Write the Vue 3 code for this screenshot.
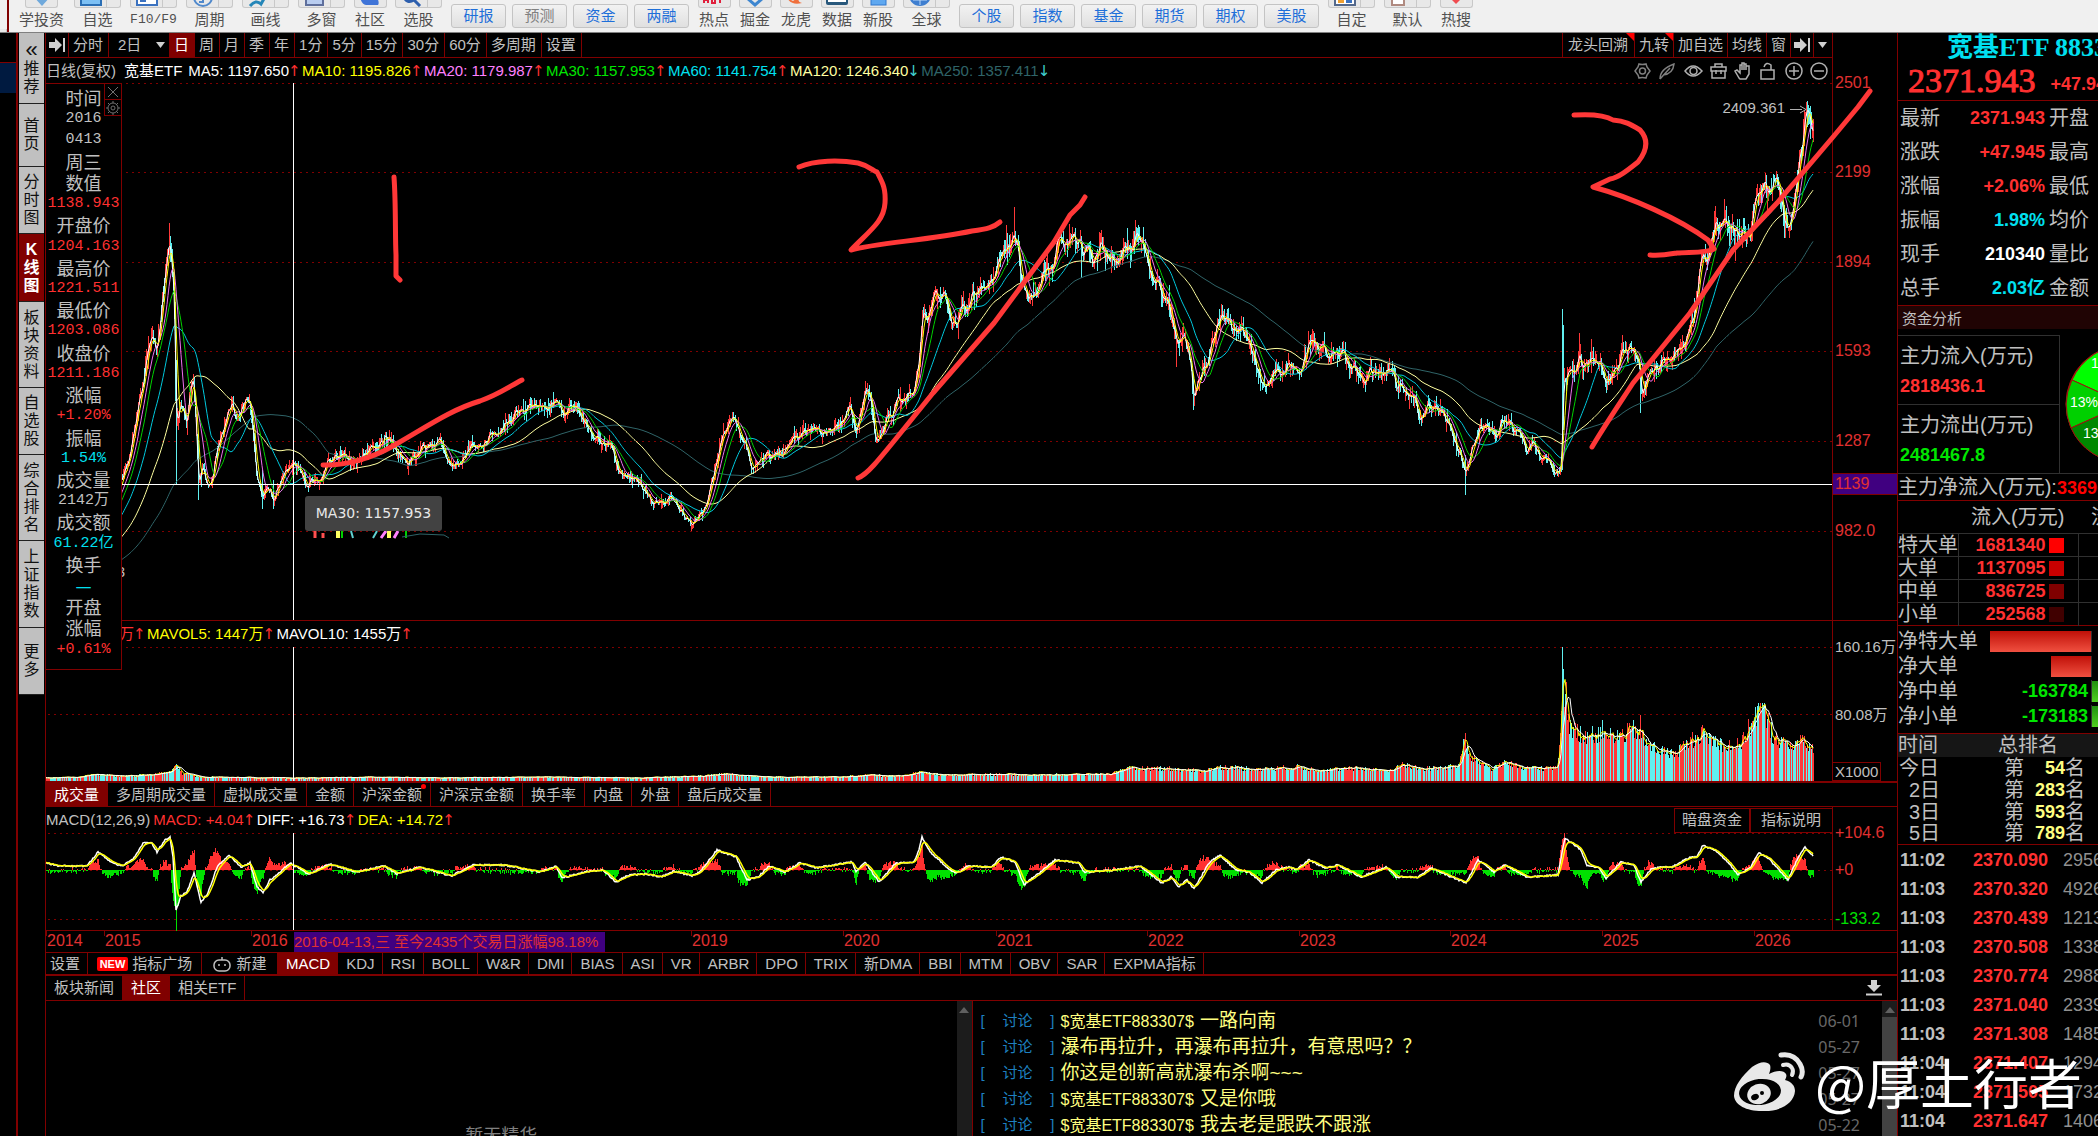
<script setup>
import { ref } from 'vue'

/* ---------- toolbar ---------- */
const toolsA = [
  { t: '拟', k: 'pen', c: 'edge' },
  { t: '学投资', k: 'diamond', c: 'wide' },
  { t: '自选', k: 'folder', c: 'split' },
  { t: 'F10/F9', k: 'doc', c: 'split serif' },
  { t: '周期', k: 'clock', c: 'split' },
  { t: '画线', k: 'draw', c: 'split' },
  { t: '多窗', k: 'window', c: 'split' },
  { t: '社区', k: 'chat', c: '' },
  { t: '选股', k: 'search', c: 'split' }
]
const linksA = ['研报', '预测', '资金', '两融']
const toolsB = [
  { t: '热点', k: 'hot', c: '' },
  { t: '掘金', k: 'gem', c: '' },
  { t: '龙虎', k: 'fire', c: '' },
  { t: '数据', k: 'data', c: '' },
  { t: '新股', k: 'new', c: '' },
  { t: '全球', k: 'globe', c: 'split' }
]
const linksB = ['个股', '指数', '基金', '期货', '期权', '美股']
const toolsC = [
  { t: '自定', k: 'custom', c: 'split' },
  { t: '默认', k: 'default', c: 'split' },
  { t: '热搜', k: 'heart', c: '' }
]

/* ---------- side tabs ---------- */
const sideTabs = [
  { t: '推荐', h: 71 }, { t: '首页', h: 63 }, { t: '分时图', h: 67 },
  { t: 'K线图', h: 68, on: true }, { t: '板块资料', h: 86 }, { t: '自选股', h: 67 },
  { t: '综合排名', h: 86 }, { t: '上证指数', h: 87 }, { t: '更多', h: 67 }
]

const dayRange = ref('2日')
const periods = ['日', '周', '月', '季', '年', '1分', '5分', '15分', '30分', '60分', '多周期', '设置']
const maList = [
  { n: 'MA5: 1197.650', c: '#ffffff', up: true },
  { n: 'MA10: 1195.826', c: '#ffff00', up: true },
  { n: 'MA20: 1179.987', c: '#ff80ff', up: true },
  { n: 'MA30: 1157.953', c: '#00e600', up: true },
  { n: 'MA60: 1141.754', c: '#00e0f0', up: true },
  { n: 'MA120: 1246.340', c: '#ffffa0', up: false },
  { n: 'MA250: 1357.411', c: '#2f6468', up: false }
]
const info = [
  ['时间'], ['2016'], ['0413'], ['周三'], ['数值'], ['1138.943', 'r'],
  ['开盘价'], ['1204.163', 'r'], ['最高价'], ['1221.511', 'r'], ['最低价'], ['1203.086', 'r'],
  ['收盘价'], ['1211.186', 'r'], ['涨幅'], ['+1.20%', 'r'], ['振幅'], ['1.54%', 'c'],
  ['成交量'], ['2142万'], ['成交额'], ['61.22亿', 'c'], ['换手'], ['—', 'c'],
  ['开盘'], ['涨幅'], ['+0.61%', 'r']
]
const volTabs = ['成交量', '多周期成交量', '虚拟成交量', '金额', '沪深金额', '沪深京金额', '换手率', '内盘', '外盘', '盘后成交量']
const indTabs = ['MACD', 'KDJ', 'RSI', 'BOLL', 'W&R', 'DMI', 'BIAS', 'ASI', 'VR', 'ARBR', 'DPO', 'TRIX', '新DMA', 'BBI', 'MTM', 'OBV', 'SAR', 'EXPMA指标']
const priceGrid = [
  { v: '2501', y: 83 }, { v: '2199', y: 172 }, { v: '1894', y: 262 },
  { v: '1593', y: 351 }, { v: '1287', y: 441 }, { v: '982.0', y: 531 }
]
const years = [
  ['2014', 46], ['2015', 104], ['2016', 251], ['2019', 691], ['2020', 843], ['2021', 996],
  ['2022', 1147], ['2023', 1299], ['2024', 1450], ['2025', 1602], ['2026', 1754]
]

/* ---------- series ---------- */
let seed = 20160413
const rnd = () => {
  seed = (seed * 1103515245 + 12345) % 2147483648
  return seed / 2147483648
}
const parse = s => s.trim().split(/\s+/).map(p => p.split(',').map(Number))
const interp = pts => {
  let i = 0
  return x => {
    while (i < pts.length - 2 && x > pts[i + 1][0]) i++
    const [x0, y0] = pts[i]
    const [x1, y1] = pts[i + 1]
    return y0 + ((y1 - y0) * Math.max(0, Math.min(x - x0, x1 - x0))) / (x1 - x0)
  }
}
const line = (arr, from, to, x0) => {
  let d = ''
  for (let x = from; x <= to; x++) d += (d ? 'L' : 'M') + x + ' ' + arr[x - x0].toFixed(1)
  return d
}
const average = (arr, w) => {
  let s = 0
  return arr.map((v, i) => {
    s += v
    if (i >= w) s -= arr[i - w]
    return s / Math.min(i + 1, w)
  })
}

const pricePts = parse(`-110,600 40,575 80,550 104,520 122,478 135,430 142,385 150,345 153,338 156,350 160,328 164,280 167,258
169,246 171,255 174,300 175,395 177,422 180,395 183,408 186,425 190,388 193,380 196,440 198,488 202,465 207,488 211,480 218,445
226,420 229,407 232,404 236,420 240,415 246,398 250,407 254,440 256,470 262,500 266,485 273,502 280,480 287,470 293,463 300,474
307,485 312,478 322,475 328,458 338,460 343,450 350,458 358,462 367,450 376,447 385,436 392,449 400,460 407,465 415,455 427,446
440,443 447,458 452,464 460,462 470,448 488,435 515,415 542,405 555,400 562,412 575,406 589,428 609,441 618,470 640,483 656,504
669,496 682,512 692,524 702,515 712,482 722,435 732,422 743,441 752,466 765,455 779,464 792,439 809,431 823,435 836,430 840,427
849,403 856,423 865,390 870,397 875,438 883,430 897,405 902,410 915,387 919,353 922,305 927,313 933,302 938,303 945,297 949,315
956,316 961,300 967,305 972,290 983,290 993,283 999,253 1006,245 1010,250 1014,233 1017,253 1021,290 1027,297 1036,292 1043,275
1051,275 1056,247 1063,253 1070,242 1078,238 1083,250 1086,245 1092,258 1101,248 1108,258 1118,253 1126,250 1133,243 1138,240
1147,250 1151,270 1156,278 1161,300 1168,297 1176,338 1184,343 1190,360 1193,393 1197,383 1202,370 1206,373 1211,347 1218,319
1222,315 1229,327 1236,333 1242,327 1247,337 1252,347 1258,373 1263,385 1270,385 1277,367 1283,373 1288,362 1295,375 1302,363
1308,342 1315,342 1322,350 1329,360 1340,349 1345,360 1354,367 1363,378 1372,373 1381,375 1388,367 1396,392 1400,387 1407,397
1415,400 1419,418 1430,404 1440,413 1452,433 1460,453 1465,476 1472,443 1480,425 1490,433 1495,437 1500,421 1510,425 1520,440
1527,450 1532,445 1543,460 1557,473 1561,463 1563,385 1567,378 1570,370 1575,370 1579,347 1583,371 1592,359 1600,363 1605,388
1613,373 1622,352 1632,349 1638,363 1641,394 1647,380 1653,369 1667,367 1673,360 1682,343 1688,320 1693,315 1697,287 1702,255
1707,257 1712,232 1716,225 1719,243 1724,220 1730,224 1737,241 1743,234 1750,232 1757,186 1763,183 1767,195 1774,182 1780,193
1785,221 1790,218 1795,185 1800,165 1804,130 1808,123 1813,130`)

const X0 = -110
const X1 = 1813
const spikes = { 170: [236, 262], 176: [360, 484], 198: [440, 500], 262: [470, 509], 273: [480, 509], 1014: [207, 240], 1006: [225, 250], 1081: [245, 278], 1176: [330, 367], 1193: [375, 410], 1222: [307, 320], 1308: [331, 345], 1465: [455, 495], 1562: [309, 470], 1563: [325, 430], 1579: [333, 360], 1591: [339, 362], 1640: [375, 413], 1715: [206, 235], 1725: [210, 228], 1735: [235, 261], 1784: [205, 238], 1804: [110, 140], 1810: [111, 135] }
const closes = []
let redBars = ''
let cyanBars = ''
const priceAt = interp(pricePts)
let drift = 0
for (let x = X0; x <= X1; x++) {
  const base = priceAt(x)
  const amp = 3 + Math.max(0, 531 - base) * 0.017
  drift = drift * 0.72 + (rnd() - 0.5) * amp * 1.8
  const c = base + drift
  closes.push(c)
  if (x >= 46) {
    const prev = closes[closes.length - 2]
    const up = rnd() < 0.3 ? rnd() > 0.5 : c < prev
    const hi = Math.min(c, prev) - rnd() * rnd() * amp * 2.4
    const lo = Math.max(c, prev) + rnd() * rnd() * amp * 2.4
    const s = spikes[x] || [hi, lo]
    const seg = `M${x}.5 ${Math.round(Math.min(s[0], hi))}V${Math.round(Math.max(s[1], lo))}`
    if (up && x !== 1562 && x !== 1563) redBars += seg
    else cyanBars += seg
  }
}
const maDefs = [[155, '#2f6468'], [75, '#ffffa0'], [37, '#00c8dc'], [3, '#ffffff'], [19, '#00d000'], [12, '#f070f0'], [6, '#ffff00']]
const maPaths = maDefs.map(([w, c]) => ({ c, d: line(average(closes, w), 46, X1, X0) }))

/* volume */
const volPts = parse(`46,3 80,4 92,7 120,5 150,6 170,9 175,16 182,8 200,4 300,3 385,4 440,3 540,4 640,3 700,5 725,7 760,4 840,4 870,6
900,5 920,9 940,6 1000,7 1030,6 1110,7 1122,12 1160,13 1200,10 1220,14 1260,12 1300,14 1320,11 1360,13 1392,10 1400,18 1420,12
1458,15 1464,40 1470,24 1482,18 1492,12 1505,20 1520,13 1557,13 1561,70 1565,92 1570,52 1580,48 1592,46 1605,52 1612,42 1625,48
1636,52 1645,38 1660,31 1672,27 1685,36 1700,48 1712,42 1725,36 1740,36 1750,56 1758,72 1764,68 1772,48 1785,36 1800,40 1813,33`)
const volAt = interp(volPts)
const vols = []
let volRed = ''
let volCyan = ''
for (let x = 46; x <= X1; x++) {
  let h = volAt(x) * (0.78 + rnd() * 0.42)
  if (x === 1562) h = 134
  if (x === 1563) h = 112
  if (x === 1640) h = 66
  if (x === 1465) h = 48
  if (x === 176) h = 17
  vols.push(781 - h)
  const seg = `M${x}.5 781V${Math.round(781 - h)}`
  if (Math.floor(rnd() * 2) && x !== 1562 && x !== 1563) volRed += seg
  else volCyan += seg
}
const volMa5 = line(average(vols, 4), 46, X1, 46)
const volMa10 = line(average(vols, 9), 46, X1, 46)

/* MACD */
const diffPts = parse(`46,863 60,866 87,866 98,852 112,863 123,866 134,858 143,843 152,843 157,852 165,840 170,837 173,857 176,910
181,896 187,892 194,873 201,902 208,893 217,867 229,855 241,867 250,863 257,887 263,893 270,880 279,873 290,863 308,874 330,864
357,872 384,866 397,874 420,867 451,876 473,865 504,865 540,872 556,866 562,878 585,872 603,870 616,882 629,875 647,874 661,877
674,871 692,876 700,872 717,850 736,857 747,880 758,877 769,866 785,872 800,863 816,868 852,862 856,872 865,862 879,882 896,863
914,862 919,850 922,837 930,852 950,870 957,873 968,866 992,867 1001,857 1015,862 1024,885 1039,873 1055,860 1079,863 1084,872
1115,870 1140,866 1162,883 1171,877 1178,887 1187,880 1194,889 1209,863 1220,855 1236,870 1249,872 1262,883 1276,870 1289,867
1296,870 1309,860 1325,868 1338,865 1361,877 1387,867 1396,877 1418,877 1431,868 1454,878 1466,883 1478,860 1494,872 1505,865
1527,877 1558,875 1563,847 1565,838 1581,850 1587,865 1599,868 1606,878 1621,862 1634,865 1641,882 1652,868 1672,867 1688,858
1697,857 1703,845 1717,852 1728,862 1738,875 1750,868 1759,853 1770,860 1788,880 1797,860 1805,847 1814,857`)
const diffAt = interp(diffPts)
const diff = []
for (let x = 46; x <= X1; x++) diff.push(diffAt(x) + (rnd() - 0.5) * 1.6)
let ema = diff[0]
const dea = diff.map(v => (ema = ema * 0.7 + v * 0.3))
let macdUp = ''
let macdDown = ''
diff.forEach((v, i) => {
  const x = 46 + i
  let y = 870 + (v - dea[i]) * 3 + (rnd() - 0.5) * 3
  if (x === 1564) y = 833
  if (x === 176) y = 930
  y = Math.round(Math.max(833, Math.min(930, y)))
  if (x !== 176 && y > 905) y = 905
  if (y < 870) macdUp += `M${x}.5 870V${y}`
  else macdDown += `M${x}.5 870V${y + 1}`
})
const diffPath = line(diff, 46, X1, 46)
const deaPath = line(dea, 46, X1, 46)

/* ---------- quote panel ---------- */
const quotes = [
  ['最新', '2371.943', 'r', '开盘'], ['涨跌', '+47.945', 'r', '最高'], ['涨幅', '+2.06%', 'r', '最低'],
  ['振幅', '1.98%', 'c', '均价'], ['现手', '210340', 'w', '量比'], ['总手', '2.03亿', 'c', '金额']
]
const orders = [
  ['特大单', '1681340', 'q1'], ['大单', '1137095', 'q2'], ['中单', '836725', 'q3'], ['小单', '252568', 'q4']
]
const nets = [
  { t: '净特大单', w: 101 }, { t: '净大单', w: 40 },
  { t: '净中单', v: '-163784' }, { t: '净小单', v: '-173183' }
]
const ranks = [['今日', '54'], ['2日', '283'], ['3日', '593'], ['5日', '789']]
const ticks = [
  ['11:02', '2370.090', '2956'], ['11:03', '2370.320', '4926'], ['11:03', '2370.439', '1213'],
  ['11:03', '2370.508', '1338'], ['11:03', '2370.774', '2988'], ['11:03', '2371.040', '2339'],
  ['11:03', '2371.308', '1485'], ['11:04', '2371.407', '1294'], ['11:04', '2371.505', '1732'],
  ['11:04', '2371.647', '1406']
]
const posts = [
  { s: '$宽基ETF883307$', t: '一路向南', d: '06-01' },
  { s: '', t: '瀑布再拉升，再瀑布再拉升，有意思吗？？', d: '05-27' },
  { s: '', t: '你这是创新高就瀑布杀啊~~~', d: '05-27' },
  { s: '$宽基ETF883307$', t: '又是你哦', d: '05-27' },
  { s: '$宽基ETF883307$', t: '我去老是跟跌不跟涨', d: '05-22' }
]
</script>

<template>
  <div class="app">
    <header class="toolbar">
      <template v-for="(group, g) in [[toolsA, linksA], [toolsB, linksB], [toolsC, []]]" :key="g">
        <button v-for="t in group[0]" :key="t.t" class="tool" :class="t.c">
          <span class="tool-box">
            <svg class="tool-ico" viewBox="0 0 24 8" aria-hidden="true">
              <path v-if="t.k === 'pen'" d="M5 -3L13 6" stroke="#b5602a" stroke-width="5" />
              <path v-if="t.k === 'diamond'" d="M3 -4H21L12 6Z" fill="#6fa9dc" />
              <path v-if="t.k === 'folder'" d="M2 -3H22V5H2Z" fill="#7cc0f4" stroke="#2a6fb5" stroke-width="2" />
              <g v-if="t.k === 'doc'"><path d="M2 -3H22V5H2Z" fill="#fff" stroke="#3b72c0" stroke-width="2" /><path d="M5 -2H11V2H5Z" fill="#3b72c0" /></g>
              <g v-if="t.k === 'clock'" fill="none" stroke="#5089cc" stroke-width="2"><circle cx="12" cy="-3" r="9" /><path d="M12 -3V2H8" /></g>
              <path v-if="t.k === 'draw'" d="M3 6Q9 -1 14 4L18 -3" fill="none" stroke="#2486b8" stroke-width="3" />
              <path v-if="t.k === 'window'" d="M3 -4H20V5H3Z" fill="#b9cdf0" stroke="#5f6f9c" stroke-width="2" />
              <path v-if="t.k === 'chat'" d="M2 -4H18Q22 2 20 5H8Q3 4 2 -4Z" fill="#3f74d8" />
              <path v-if="t.k === 'search'" d="M4 -3Q7 4 14 0L20 6" fill="none" stroke="#2d5fae" stroke-width="3" />
              <path v-if="t.k === 'hot'" d="M2 -2V3M2 0H6M6 -2V3M10 -2V3H13V-2M18 -2V3M16 -2H21" fill="none" stroke="#e0203c" stroke-width="2" />
              <path v-if="t.k === 'gem'" d="M4 -2L12 5L20 -2" fill="none" stroke="#3d86d0" stroke-width="3" />
              <path v-if="t.k === 'fire'" d="M3 -2Q8 6 18 3Q13 2 15 -3L9 1Z" fill="#f0703c" />
              <g v-if="t.k === 'data'"><rect x="1" y="-4" width="22" height="9" rx="2" fill="#28587c" /><path d="M3 1H21" stroke="#fff" stroke-width="2" /></g>
              <rect v-if="t.k === 'new'" x="5" y="-3" width="15" height="8" fill="#5fa8f0" stroke="#3078d0" />
              <g v-if="t.k === 'globe'"><circle cx="12" cy="-5" r="11" fill="#3f7fd0" /><path d="M12 -3V5M5 0H19" stroke="#bcd8f6" stroke-width="1" /></g>
              <g v-if="t.k === 'custom'"><path d="M2 -4H22V5H2Z" fill="#fff" stroke="#54698c" stroke-width="2" /><path d="M5 -1H11V3H5Z" fill="#f0a030" /><path d="M13 -2H19V3H13Z" fill="#3b72c0" /></g>
              <path v-if="t.k === 'default'" d="M3 -4H15V5H3Z" fill="#fff" stroke="#b08a80" stroke-width="2" />
              <path v-if="t.k === 'heart'" d="M4 -4H20L12 4Z" fill="#f04c50" />
            </svg>
          </span>
          <span class="tool-label">{{ t.t }}</span>
        </button>
        <div v-if="group[1].length" class="links">
          <button v-for="l in group[1]" :key="l" class="link" :class="{ dim: l === '预测' }">{{ l }}</button>
        </div>
      </template>
    </header>

    <div class="body">
      <div class="edge"><div class="edge-sel"></div></div>

      <nav class="side">
        <button v-for="s in sideTabs" :key="s.t" class="side-tab" :class="{ on: s.on }" :style="{ height: s.h + 'px' }">
          <span v-if="s.t === '推荐'" class="chev">«</span>
          <span class="side-text">{{ s.t }}</span>
        </button>
      </nav>

      <main class="center">
        <div class="row periods">
          <div class="row-main">
            <button class="cell ico" aria-label="跳转">
              <svg width="16" height="14" viewBox="0 0 16 14"><path d="M0 4H6V0L13 7L6 14V10H0Z" fill="#d0d0d0" /><path d="M15 0V14" stroke="#d0d0d0" stroke-width="2" /></svg>
            </button>
            <button class="cell">分时</button>
            <span class="cell pick">
              <select v-model="dayRange" aria-label="多日分时"><option>2日</option></select>
              <svg width="9" height="6" viewBox="0 0 9 6"><path d="M0 0H9L4.500 6Z" fill="#d0d0d0" /></svg>
            </span>
            <button v-for="p in periods" :key="p" class="cell" :class="{ on: p === '日' }">{{ p }}</button>
            <span class="grow"></span>
            <button class="cell lead flag">龙头回溯</button>
            <button class="cell snug flag">九转</button>
            <button class="cell snug">加自选</button>
            <button class="cell snug">均线</button>
            <button class="cell snug">窗</button>
            <button class="cell ico" aria-label="收起">
              <svg width="16" height="14" viewBox="0 0 16 14"><path d="M0 4H6V0L13 7L6 14V10H0Z" fill="#d0d0d0" /><path d="M15 0V14" stroke="#d0d0d0" stroke-width="2" /></svg>
            </button>
            <button class="cell drop" aria-label="更多选项">
              <svg width="9" height="6" viewBox="0 0 9 6"><path d="M0 0H9L4.500 6Z" fill="#d0d0d0" /></svg>
            </button>
          </div>
          <div class="axis"></div>
        </div>

        <div class="row ma-row">
          <div class="row-main">
            <span class="ma-title">日线(复权)</span>
            <b class="ma-name">宽基ETF</b>
            <span v-for="m in maList" :key="m.n" class="ma" :style="{ color: m.c }">{{ m.n }}<i :class="m.up ? 'up' : 'down'">{{ m.up ? '↑' : '↓' }}</i></span>
            <span class="grow"></span>
            <svg class="chart-tools" width="198" height="20" viewBox="0 0 198 20" fill="none" stroke="#b0b0b0" stroke-width="1.500">
              <path stroke="#808080" d="M7 3Q10 4 14 3L15 6L18 10L15 14L14 17Q10 16 7 17L6 14L3 10L6 6Z" /><circle stroke="#808080" cx="10.500" cy="10" r="3" />
              <path stroke="#808080" d="M28 18Q28 8 42 3Q41 13 31 14M28 18L38 7" />
              <path d="M53 10Q61 0 70 10Q61 20 53 10Z" /><circle cx="61.500" cy="10" r="3.500" />
              <path d="M79 6H94V10H79ZM80 10V17H93V10M83 6V3H90V6M84 9V13M89 9V13" />
              <path d="M107 17L103 10L105 9L108 12V4H110V9V2H112V9V3H114V9V5H117V13L114 18H108Z" />
              <path d="M129 9H142V18H129ZM132 6Q134 0 139 4V9" />
              <circle cx="162" cy="10" r="8" /><path d="M157 10H167M162 5V15" />
              <circle cx="187" cy="10" r="8" /><path d="M182 10H192" />
            </svg>
          </div>
          <div class="axis"></div>
        </div>

        <section class="row price">
          <div class="row-main">
            <svg class="plot" viewBox="46 83 1786 537" preserveAspectRatio="none">
              <g class="grid"><path v-for="g in priceGrid" :key="g.y" :d="`M48 ${g.y}.5H1832`" /></g>
              <g fill="none" shape-rendering="crispEdges">
                <path :d="cyanBars" stroke="#60f0f0" />
                <path :d="redBars" stroke="#ff3838" />
              </g>
              <g fill="none"><path v-for="m in maPaths" :key="m.c" :d="m.d" :stroke="m.c" /></g>
              <path d="M315 531V538M323 533V538" stroke="#ff5050" stroke-width="3" />
              <path d="M338 531V538M389 531V538" stroke="#ffff60" stroke-width="4" />
              <path d="M342 531V538M406 531V538" stroke="#00d000" stroke-width="2" />
              <path d="M351 531L353 538M373 538L377 531" stroke="#60d0d0" stroke-width="2" />
              <path d="M381 538L386 531M394 538L398 531" stroke="#ff80ff" stroke-width="3" />
              <path d="M402 537L420 534L444 535L449 538" fill="none" stroke="#2f6468" />
              <path d="M46 484.500H1832M293.500 83V620" stroke="#ffffff" />
              <path d="M1790 109.500H1802M1800 106L1806 109.500L1800 113" fill="none" stroke="#b0b0b0" />
            </svg>
            <span class="peak">2409.361</span>
            <span class="trough">993</span>
            <div class="tip">MA30: 1157.953</div>
          </div>
          <div class="axis">
            <span v-for="g in priceGrid" :key="g.v" class="tick" :style="{ top: g.y - 83 + 'px' }">{{ g.v }}</span>
            <span class="cursor">1139</span>
          </div>
          <svg class="ink" viewBox="46 83 1851 537" preserveAspectRatio="none">
            <path d="M394 177C396 205 395 235 396 255V276L400 280" />
            <path d="M323 465C345 466 372 458 393 446C425 428 450 410 480 401C500 394 510 386 522 380" />
            <path d="M799 167C815 160 840 160 858 163C870 166 873 171 877 172C882 182 886 187 885 203C884 222 868 232 851 250C875 243 930 240 972 231C988 229 994 227 1000 222" />
            <path d="M858 478C869 474 880 458 933 393L994 323L1054 242L1070 215L1080 205L1085 197" />
            <path d="M1574 115C1590 114 1605 115 1613 120C1625 121 1630 124 1640 130C1650 141 1646 152 1638 162C1628 170 1618 178 1610 179L1593 187C1630 197 1680 219 1708 240L1714 249C1708 253 1690 252 1677 253C1665 255 1660 256 1650 255" />
            <path d="M1592 447C1605 425 1620 403 1633 383L1690 313L1733 250L1777 203L1833 137L1858 107L1870 91" />
          </svg>
          <aside class="info">
            <div class="info-tools">
              <button aria-label="关闭"><svg width="12" height="12" viewBox="0 0 12 12"><path d="M1 1L11 11M11 1L1 11" stroke="#707070" /></svg></button>
              <button aria-label="参数"><svg width="14" height="14" viewBox="0 0 14 14" fill="none" stroke="#707070"><circle cx="7" cy="7" r="5" /><circle cx="7" cy="7" r="2" /><path d="M7 0V2M7 12V14M0 7H2M12 7H14M2 2L4 4M10 10L12 12M12 2L10 4M4 10L2 12" /></svg></button>
            </div>
            <span v-for="(r, i) in info" :key="i" :class="[r[1], { num: /\d/.test(r[0]) }]">{{ r[0] }}</span>
          </aside>
        </section>

        <div class="row vol-head">
          <div class="row-main">
            <span class="ma vol-first">万<i class="up">↑</i></span>
            <span class="ma yellow">MAVOL5: 1447万<i class="up">↑</i></span>
            <span class="ma white">MAVOL10: 1455万<i class="up">↑</i></span>
          </div>
          <div class="axis"></div>
        </div>

        <section class="row volume">
          <div class="row-main">
            <svg class="plot" viewBox="46 647 1786 134" preserveAspectRatio="none">
              <g class="grid"><path d="M48 647.500H1832M48 714.500H1832" /></g>
              <path :d="volRed" stroke="#ff3838" shape-rendering="crispEdges" />
              <path :d="volCyan" stroke="#60f0f0" shape-rendering="crispEdges" />
              <path :d="volMa5" fill="none" stroke="#ffff00" />
              <path :d="volMa10" fill="none" stroke="#ffffff" />
              <path d="M293.500 647V781" stroke="#ffffff" />
            </svg>
          </div>
          <div class="axis grey">
            <span class="tick t0">160.16万</span>
            <span class="tick t1">80.08万</span>
            <span class="unit">X1000</span>
          </div>
        </section>

        <div class="row tabs">
          <button v-for="t in volTabs" :key="t" class="tab" :class="{ on: t === '成交量', dot: t === '沪深金额' }">{{ t }}</button>
        </div>

        <div class="row macd-head">
          <div class="row-main">
            <span class="ma grey-t">MACD(12,26,9)</span>
            <span class="ma red">MACD: +4.04<i class="up">↑</i></span>
            <span class="ma white">DIFF: +16.73<i class="up">↑</i></span>
            <span class="ma yellow">DEA: +14.72<i class="up">↑</i></span>
            <span class="grow"></span>
            <button class="boxed">暗盘资金</button>
            <button class="boxed desc">指标说明</button>
          </div>
          <div class="axis"></div>
        </div>

        <section class="row macd">
          <div class="row-main">
            <svg class="plot" viewBox="46 833 1786 97" preserveAspectRatio="none">
              <g class="grid"><path d="M48 833.500H1832M48 870.500H1832M48 919.500H1832" /></g>
              <path :d="macdUp" stroke="#ff3030" shape-rendering="crispEdges" />
              <path :d="macdDown" stroke="#00e000" shape-rendering="crispEdges" />
              <path :d="diffPath" fill="none" stroke="#ffffff" stroke-width="1.500" />
              <path :d="deaPath" fill="none" stroke="#ffff00" stroke-width="1.500" />
              <path d="M293.500 833V930" stroke="#ffffff" />
            </svg>
          </div>
          <div class="axis">
            <span class="tick m0">+104.6</span>
            <span class="tick m1">+0</span>
            <span class="tick m2">-133.2</span>
          </div>
        </section>

        <div class="dates">
          <span v-for="y in years" :key="y[0]" class="year" :style="{ left: ((y[1] - 46) / 1851) * 100 + '%' }">{{ y[0] }}</span>
          <span class="span-tip">2016-04-13,三 至今2435个交易日涨幅98.18%</span>
        </div>

        <div class="row inds">
          <button class="tab tight">设置</button>
          <button class="tab market"><span class="new">NEW</span>指标广场</button>
          <button class="tab create">
            <svg width="18" height="16" viewBox="0 0 18 16" fill="none" stroke="#c0c0c0" stroke-width="1.500"><rect x="1" y="4" width="16" height="11" rx="5" /><path d="M9 1V4M6 8V10M12 8V10" /></svg>新建
          </button>
          <button v-for="t in indTabs" :key="t" class="tab ind" :class="{ on: t === 'MACD' }">{{ t }}</button>
        </div>

        <div class="row news-tabs">
          <button class="tab">板块新闻</button>
          <button class="tab on">社区</button>
          <button class="tab">相关ETF</button>
          <span class="grow"></span>
          <button class="down-btn" aria-label="折叠">
            <svg width="16" height="16" viewBox="0 0 16 16"><path d="M5 0H11V5H15L8 12L1 5H5Z" fill="#d0d0d0" /><path d="M0 14.500H16" stroke="#d0d0d0" stroke-width="2" /></svg>
          </button>
        </div>

        <div class="news">
          <section class="essence"><p>暂无精华</p><div class="scroll"><svg width="10" height="6" viewBox="0 0 10 6"><path d="M0 6L5 0L10 6Z" fill="#606060" /></svg></div></section>
          <section class="forum">
            <ul>
              <li v-for="(p, i) in posts" :key="i">
                <span class="tag"><span>[</span><span>讨论</span><span>]</span></span>
                <a href="#"><span v-if="p.s" class="sym">{{ p.s }}</span>{{ p.t }}</a>
                <time>{{ p.d }}</time>
              </li>
            </ul>
            <div class="scroll full"><svg width="10" height="6" viewBox="0 0 10 6"><path d="M0 6L5 0L10 6Z" fill="#606060" /></svg><div class="thumb"></div></div>
          </section>
        </div>
      </main>

      <aside class="quote">
        <h1>宽基ETF 883307</h1>
        <div class="last"><span class="big">2371.943</span><span class="chg">+47.945</span></div>
        <table class="qt">
          <tbody>
            <tr v-for="q in quotes" :key="q[0]"><th>{{ q[0] }}</th><td :class="q[2]">{{ q[1] }}</td><th class="second">{{ q[3] }}</th></tr>
          </tbody>
        </table>
        <h2>资金分析</h2>
        <div class="flow">
          <div class="flow-cells">
            <div class="fc"><span>主力流入(万元)</span><b class="r">2818436.1</b></div>
            <div class="fc"><span>主力流出(万元)</span><b class="g">2481467.8</b></div>
          </div>
          <svg width="120" height="120" viewBox="0 0 120 120" stroke="#a01010">
            <circle cx="60" cy="60" r="59" fill="#c00000" />
            <path d="M60 60L7 36A59 59 0 0 1 60 1Z" fill="#00ff00" />
            <path d="M60 60L7 36A59 59 0 0 0 6 84Z" fill="#00d000" />
            <path d="M60 60L6 84A59 59 0 0 0 60 119Z" fill="#008800" />
            <g fill="#fff" stroke="none" font-size="14" font-family="Liberation Sans, sans-serif"><text x="26" y="24">13%</text><text x="5" y="63">13%</text><text x="18" y="94">13%</text></g>
          </svg>
        </div>
        <p class="netin">主力净流入(万元):<b>336968.3</b></p>
        <table class="orders">
          <thead><tr><th></th><th>流入(万元)</th><th>流出(万元)</th></tr></thead>
          <tbody><tr v-for="o in orders" :key="o[0]"><th>{{ o[0] }}</th><td>{{ o[1] }}<i :class="o[2]"></i></td><td></td></tr></tbody>
        </table>
        <div class="nets">
          <div v-for="n in nets" :key="n.t" class="net">
            <span class="net-name">{{ n.t }}</span>
            <span class="net-left"><i v-if="n.w" class="bar" :style="{ width: n.w + 'px' }"></i><b v-else>{{ n.v }}</b></span>
            <span class="net-right"><i v-if="n.v" class="bar gbar"></i></span>
          </div>
        </div>
        <table class="ranks">
          <colgroup><col class="k0" /><col class="k1" /><col class="k2" /><col /></colgroup>
          <thead><tr><th>时间</th><th colspan="3">总排名</th></tr></thead>
          <tbody><tr v-for="r in ranks" :key="r[0]"><th :class="{ ind1: r[0] !== '今日' }">{{ r[0] }}</th><td class="di">第</td><td class="num">{{ r[1] }}</td><td>名</td></tr></tbody>
        </table>
        <table class="ticks">
          <tbody><tr v-for="(t, i) in ticks" :key="i"><th>{{ t[0] }}</th><td class="r">{{ t[1] }}</td><td class="v">{{ t[2] }}</td></tr></tbody>
        </table>
      </aside>
    </div>

    <div class="mark">
      <svg width="72" height="60" viewBox="0 0 72 60">
        <path d="M1 44C1 34 9 24 19 15C27 9 34 9 37 13C38 16 37 19 36 22C43 18 51 18 53 22C54 24 53 26 52 28C59 30 62 34 62 39C61 52 46 60 29 59C13 59 2 53 1 44Z" fill="#e8e8e8" />
        <ellipse cx="27" cy="40" rx="21" ry="13" fill="#000" transform="rotate(-6 27 40)" />
        <ellipse cx="26" cy="42" rx="12" ry="10" fill="#e8e8e8" transform="rotate(-20 26 42)" />
        <ellipse cx="22" cy="45" rx="4" ry="3" fill="#000" transform="rotate(-25 22 45)" /><circle cx="29" cy="41" r="2" fill="#000" />
        <path d="M48 3Q61 1 67 12Q71 19 68 25" fill="none" stroke="#e8e8e8" stroke-width="5" stroke-linecap="round" />
        <path d="M50 13Q56 11 59 16Q61 19 59 23" fill="none" stroke="#e8e8e8" stroke-width="4" stroke-linecap="round" />
      </svg>
      <span>@厚土行者</span>
    </div>
  </div>
</template>

<style>
body { margin: 0; background: #000; }
</style>

<style scoped>
* { box-sizing: border-box; }
.app {
  --line: #800000;
  height: 100vh; overflow: hidden; display: flex; flex-direction: column; position: relative;
  background: #000; color: #c0c0c0; white-space: nowrap;
  font: 15px/20px "Liberation Sans", "Noto Sans CJK SC", sans-serif;
}
button { margin: 0; padding: 0; border: 0; background: none; color: inherit; font: inherit; white-space: nowrap; cursor: pointer; }
i { font-style: normal; }
table { border-collapse: collapse; table-layout: fixed; }
th { font-weight: normal; text-align: left; }
th, td { padding: 0; }
h1, h2, p, ul { margin: 0; padding: 0; }
.grow { flex: 1; }
.r { color: #ff3030; } .c { color: #00e0f0; } .w { color: #fff; } .g { color: #00e600; }

/* toolbar */
.toolbar { height: 33px; flex: none; display: flex; gap: 9px; overflow: hidden; background: #f0f0f0; border-bottom: 1px solid #808080; color: #505050; }
.tool { width: 32px; flex: none; display: flex; flex-direction: column; align-items: center; }
.tool.split, .tool.wide { width: 47px; }
.tool.edge { width: 9px; align-items: flex-end; }
.tool.serif { font-family: "Liberation Mono", monospace; font-size: 13px; }
.tool-box { width: 33px; height: 8px; flex: none; display: flex; justify-content: center; border: 1px solid #c8c8c8; border-top: 0; border-radius: 0 0 3px 3px; background: #e8e8e8; overflow: hidden; }
.split .tool-box { width: 47px; justify-content: flex-start; padding-left: 4px; background: linear-gradient(90deg, #e8e8e8 31px, #c8c8c8 31px, #c8c8c8 32px, #e8e8e8 32px); }
.tool-ico { width: 24px; height: 8px; }
.tool-label { margin-top: 2px; }
.links { display: flex; gap: 6px; padding-top: 4px; }
.link { width: 55px; height: 24px; border: 1px solid #c4c4c4; border-radius: 3px; background: linear-gradient(#f2f2f2, #e0e0e0); color: #1e6fd9; }
.link.dim { color: #808080; }

.body { flex: 1; display: flex; min-height: 0; }
.edge { width: 18px; flex: none; border-right: 2px solid var(--line); padding-top: 29px; }
.edge-sel { height: 31px; background: #001a40; border-top: 1px solid var(--line); }

/* side tabs */
.side { width: 27px; flex: none; padding: 0 1px; }
.side-tab { width: 25px; display: flex; flex-direction: column; align-items: center; justify-content: center; background: #c0c0c0; color: #101010; border-bottom: 1px solid #202020; font-size: 16px; line-height: 18px; }
.side-tab.on { background: #800000; color: #fff; font-weight: bold; }
.side-text { width: 16px; white-space: normal; word-break: break-all; text-align: center; }
.chev { font-size: 22px; line-height: 20px; }

/* center */
.center { flex: 1; min-width: 0; display: flex; flex-direction: column; border-left: 1px solid var(--line); }
.row { display: flex; flex: none; }
.row-main { flex: 1; min-width: 0; display: flex; align-items: center; position: relative; }
.axis { width: 65px; flex: none; position: relative; border-left: 1px solid var(--line); color: #e03030; font-size: 16px; }
.periods { height: 25px; }
.periods .row-main { align-items: stretch; border-bottom: 1px solid var(--line); }
.cell { display: flex; align-items: center; padding: 0 5px 0 4px; border-right: 1px solid var(--line); position: relative; }
.cell.on { background: #800000; color: #fff; }
.cell.ico { width: 23px; padding: 0 3px; }
.cell.drop { width: 18px; border-right: 0; padding: 0 4px; }
.cell.lead { padding: 0 6px 0 5px; border-left: 1px solid var(--line); }
.cell.snug { padding: 0 4px; }
.cell.flag::after { content: ""; position: absolute; right: 0; top: 0; border: 4px solid #f00; border-left-color: transparent; border-bottom-color: transparent; }
.pick { width: 61px; padding: 0 4px 0 9px; justify-content: space-between; }
.pick select { appearance: none; border: 0; padding: 0; background: #000; color: inherit; font: inherit; width: 34px; }
.ma-row { height: 25px; }
.ma-title { margin-right: 8px; }
.ma-name { color: #fff; margin-right: 6px; font-weight: normal; }
.ma { margin-right: 3px; }
.ma i { display: inline-block; width: 10px; font: 15px/18px "DejaVu Sans", sans-serif; text-indent: -1px; }
.up { color: #ff3030; } .down { color: #40d0d0; }
.chart-tools { margin-right: 2px; }
.yellow { color: #ffff00; } .white { color: #fff; } .red { color: #ff3030; }

.price { height: 538px; position: relative; border-bottom: 1px solid var(--line); }
.plot { display: block; width: 100%; height: 100%; overflow: visible; }
.grid path { stroke: #800000; stroke-dasharray: 2 4; fill: none; }
.ink { position: absolute; inset: 0; width: 100%; height: 100%; fill: none; stroke: #ff3838; stroke-width: 5; stroke-linecap: round; stroke-linejoin: round; pointer-events: none; }
.peak { position: absolute; right: 47px; top: 15px; }
.trough { position: absolute; left: 54px; top: 479px; }
.tip { position: absolute; left: 259px; top: 413px; width: 137px; height: 35px; border-radius: 3px; background: #424242; color: #e8e8e8; text-align: center; font: 14px/35px "DejaVu Sans", sans-serif; }
.info { position: absolute; left: 0; top: 0; width: 76px; height: 587px; z-index: 2; padding: 3px 0 9px; display: flex; flex-direction: column; justify-content: space-between; align-items: center; background: #000; border: 1px solid var(--line); border-left: 0; font: 18px/21px "Noto Sans CJK SC", sans-serif; }
.info .num { font: 15px/21px "Liberation Mono", "Noto Sans CJK SC", monospace; }
.info-tools { position: absolute; right: 0; top: 0; display: flex; flex-direction: column; }
.info-tools button { width: 17px; height: 16px; display: flex; align-items: center; justify-content: center; border: 1px solid var(--line); border-width: 0 0 1px 1px; }
.tick { position: absolute; left: 2px; transform: translateY(-50%); }
.cursor { position: absolute; left: 0; right: 0; top: 390px; height: 22px; padding-left: 2px; background: #400080; border: 1px solid var(--line); border-width: 1px 0; }
.vol-head { height: 26px; }
.vol-first { margin-left: 73px; color: #ff3030; }
.volume { height: 135px; border-bottom: 1px solid var(--line); }
.grey { color: #c0c0c0; font-size: 15px; }
.t0 { top: 0; } .t1 { top: 68px; }
.unit { position: absolute; left: 0; bottom: 0; padding: 0 2px; line-height: 17px; border: 1px solid var(--line); border-left: 0; }
.tabs { height: 25px; border-bottom: 1px solid var(--line); border-top: 1px solid var(--line); }
.tab { padding: 0 8px; border-right: 1px solid var(--line); position: relative; }
.tab.ind { padding: 0 7px 0 8px; }
.tab.on { background: #800000; color: #fff; }
.tab.dot::after { content: ""; position: absolute; right: 4px; top: 1px; width: 5px; height: 5px; border-radius: 50%; background: #f00; }
.macd-head { height: 26px; }
.boxed { height: 25px; padding: 0 7px; border: 1px solid var(--line); }
.boxed.desc { padding: 0 11px 0 10px; border-right: 0; }
.macd { height: 98px; border-bottom: 1px solid var(--line); }
.m0 { top: 0; } .m1 { top: 37px; } .m2 { top: 86px; color: #00e000; }
.dates { height: 21px; flex: none; position: relative; color: #e03030; }
.year { position: absolute; top: 0; border-left: 1px solid var(--line); font-size: 16px; line-height: 20px; height: 5px; }
.span-tip { position: absolute; left: 248px; top: 1px; width: 311px; height: 20px; background: #400080; }
.inds { height: 24px; border-bottom: 2px solid var(--line); border-top: 1px solid var(--line); }
.tab.tight { padding: 0 7px 0 4px; }
.tab.market { width: 114px; display: flex; align-items: center; justify-content: center; gap: 4px; }
.new { background: #f00; color: #fff; border-radius: 2px; padding: 0 3px; font: bold 11px/14px "Liberation Sans", sans-serif; }
.tab.create { width: 76px; display: flex; align-items: center; justify-content: center; gap: 6px; }
.news-tabs { height: 25px; border-bottom: 1px solid var(--line); }
.down-btn { width: 46px; display: flex; align-items: center; justify-content: center; }

.news { flex: 1; min-height: 0; display: flex; overflow: hidden; }
.essence { flex: 925; display: flex; border-right: 1px solid var(--line); }
.essence p { flex: 1; text-align: center; font-size: 18px; padding-top: 125px; color: #808080; }
.scroll { width: 15px; background: #1c1c1c; display: flex; flex-direction: column; align-items: center; padding-top: 6px; gap: 4px; }
.forum { flex: 924; display: flex; min-width: 0; }
.forum ul { flex: 1; list-style: none; padding: 7px 22px 0 8px; }
.forum li { display: flex; align-items: center; height: 26px; color: #1e80c0; }
.tag { width: 74px; display: flex; justify-content: space-between; }
.forum a { flex: 1; margin-left: 6px; color: #ffff80; text-decoration: none; font-size: 19px; }
.sym { font-size: 16px; margin-right: 6px; }
time { color: #686868; font: 16px/20px "Noto Sans", sans-serif; }
.thumb { flex: 1; align-self: stretch; background: #424242; }

/* quote panel */
.quote { width: 201px; flex: none; overflow: hidden; display: flex; flex-direction: column; border-left: 1px solid var(--line); font-size: 20px; line-height: 22px; }
h1 { flex: none; height: 29px; padding-left: 49px; color: #00e0f0; font: bold 26px/29px "Liberation Serif", "Noto Sans CJK SC", serif; }
.last { flex: none; height: 39px; padding-left: 10px; display: flex; align-items: center; gap: 15px; color: #ff3030; border-bottom: 1px solid var(--line); }
.big { font: 34px/38px "Liberation Serif", serif; -webkit-text-stroke: 1px #ff3030; }
.chg { font-size: 18px; font-weight: bold; padding-top: 6px; }
.qt { flex: none; width: 240px; }
.qt tr { height: 34px; }
.qt th { width: 60px; padding-left: 2px; }
.qt th.second { width: 93px; padding-left: 4px; }
.qt td { width: 87px; text-align: right; font-size: 18px; font-weight: bold; }
h2 { flex: none; height: 24px; padding-left: 4px; background: #200404; border-top: 1px solid var(--line); font: 15px/23px "Noto Sans CJK SC", sans-serif; }
.flow { flex: none; height: 144px; padding-top: 6px; display: flex; align-items: center; gap: 5px; }
.flow-cells { width: 162px; flex: none; border-right: 1px solid #303030; }
.flow svg { flex: none; }
.fc { height: 69px; padding: 9px 0 0 2px; border-top: 1px solid #303030; display: flex; flex-direction: column; gap: 8px; }
.fc b, .netin b { font-size: 18px; }
.netin { flex: none; height: 28px; line-height: 27px; border-top: 1px solid #303030; border-bottom: 1px solid var(--line); }
.netin b { color: #ff0000; }
.orders { flex: none; width: 300px; border-bottom: 1px solid var(--line); line-height: 20px; }
.orders thead tr { height: 32px; }
.orders thead th:nth-child(1) { width: 60px; }
.orders thead th:nth-child(2) { width: 120px; padding-left: 13px; }
.orders thead th:nth-child(3) { padding-left: 13px; }
.orders tbody tr { height: 23px; border-top: 1px solid #303030; }
.orders td { border-left: 1px solid #303030; text-align: right; padding-right: 14px; font-size: 18px; font-weight: bold; color: #ff3030; }
.orders i { display: inline-block; width: 15px; height: 15px; margin-left: 3px; vertical-align: -2px; }
.q1 { background: #ff0000; } .q2 { background: #c80000; } .q3 { background: #800000; } .q4 { background: #400000; }
.nets { flex: none; padding: 3px 0 4px; border-bottom: 1px solid var(--line); }
.net { height: 25px; display: flex; align-items: center; }
.net-name { width: 80px; flex: none; }
.net-left { width: 114px; flex: none; display: flex; justify-content: flex-end; border-right: 1px solid #303030; }
.net-left b { font-size: 18px; color: #00e600; padding-right: 3px; }
.net-right { flex: none; }
.bar { height: 21px; background: linear-gradient(#c01008, #f05040); }
.gbar { display: block; width: 60px; background: linear-gradient(#209010, #50d020); }
.ranks { flex: none; width: 260px; line-height: 20px; border-bottom: 1px solid var(--line); }
.ranks thead tr { background: #161616; height: 23px; }
.ranks tbody tr { height: 22px; }
.k0 { width: 100px; } .k1 { width: 27px; } .k2 { width: 40px; }
.ranks tbody th { padding-left: 1px; }
.ranks tbody th.ind1 { padding-left: 11px; }
.ranks .di { padding-left: 6px; }
.ranks .num { text-align: right; font-size: 18px; font-weight: bold; color: #ffff80; }
.ticks { flex: none; width: 260px; font-size: 18px; font-weight: bold; }
.ticks tr { height: 29px; }
.ticks th { width: 60px; padding-left: 2px; font-weight: bold; }
.ticks td.r { width: 90px; text-align: right; }
.ticks td.v { padding-left: 15px; font-weight: normal; color: #909090; }

.mark { position: absolute; right: 16px; bottom: 16px; display: flex; align-items: center; gap: 10px; color: #fff; font: 54px/76px "Noto Sans CJK SC", sans-serif; pointer-events: none; }
</style>
